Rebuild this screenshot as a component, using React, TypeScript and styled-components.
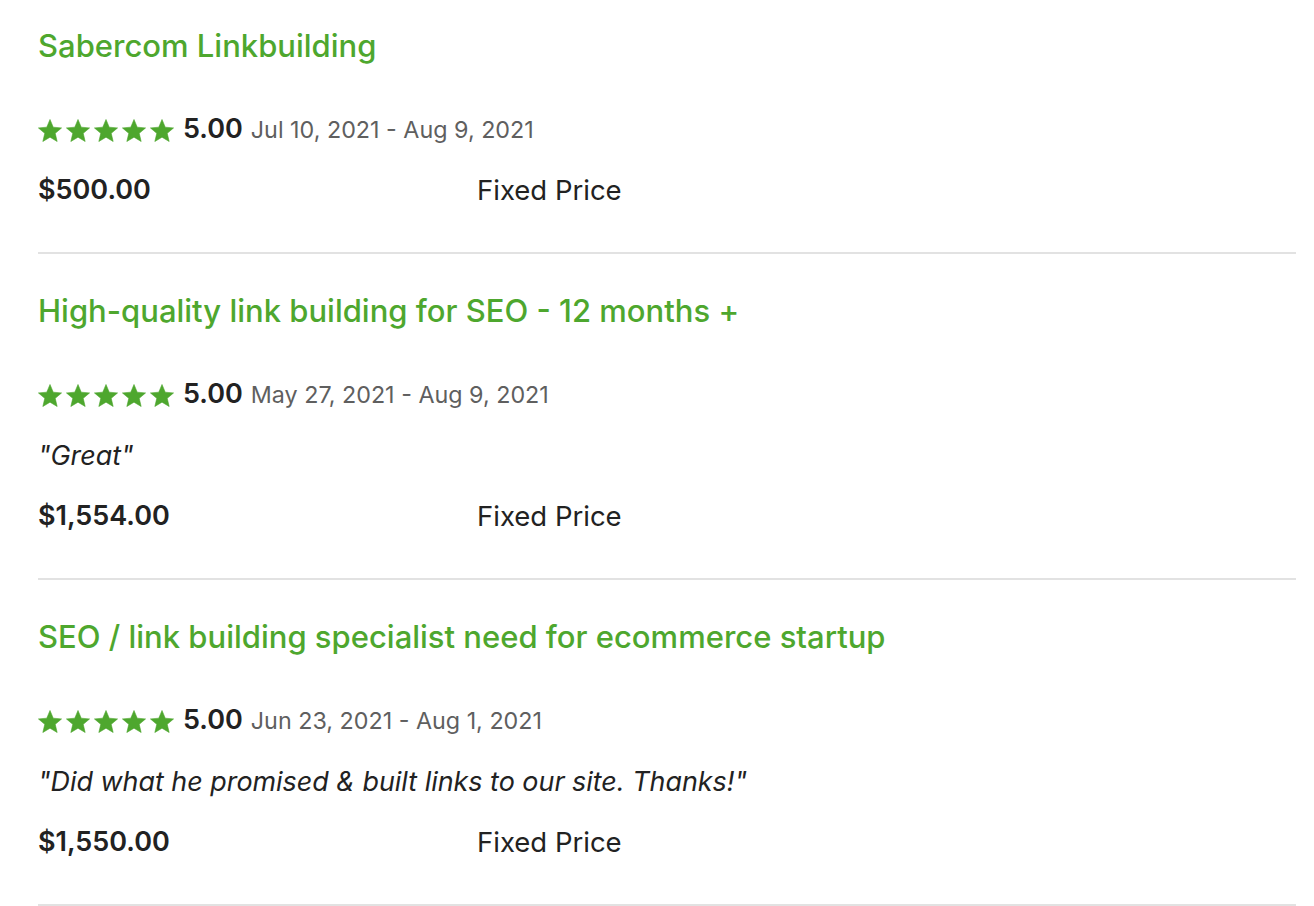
import React from "react";
import styled, { createGlobalStyle } from "styled-components";

const GlobalStyle = createGlobalStyle`
  html, body {
    margin: 0;
    padding: 0;
    background: #ffffff;
  }
  body {
    font-family: Inter, "Liberation Sans", Arial, sans-serif;
    color: #222222;
  }
`;

const List = styled.div`
  display: flex;
  flex-direction: column;
  padding: 0 18px 0 38px;
`;

const Item = styled.section`
  display: flex;
  flex-direction: column;
  padding: 37px 0 46px;
  border-bottom: 2px solid #e2e2e2;

  &:first-child {
    padding-top: 26px;
  }
`;

const Title = styled.a`
  display: block;
  font-size: 31px;
  line-height: 40px;
  font-weight: 500;
  letter-spacing: 0;
  color: #4ea72e;
  text-decoration: none;
  margin-bottom: 47px;
`;

const RatingRow = styled.div`
  display: flex;
  align-items: baseline;
  height: 32px;
  line-height: 32px;
`;

const Stars = styled.span`
  display: inline-flex;
  gap: 4px;
  align-self: center;
  margin-right: 9px;
  margin-top: 2px;
`;

const Score = styled.span`
  font-size: 27px;
  font-weight: 600;
  color: #222222;
  margin-right: 8px;
`;

const Dates = styled.span`
  font-size: 23.3px;
  color: #5f5f5f;
`;

const Quote = styled.p`
  margin: 29px 0 0;
  font-size: 26.9px;
  line-height: 32px;
  font-style: italic;
  color: #222222;
`;

const PriceRow = styled.div`
  display: grid;
  grid-template-columns: 439px 1fr;
  margin-top: 29px;
  font-size: 27px;
  line-height: 32px;
`;

const Amount = styled.span`
  font-weight: 600;
  color: #222222;
`;

const Kind = styled.span`
  font-size: 27.5px;
  font-weight: 400;
  color: #222222;
`;

const Star = () => (
  <svg width="24" height="23" viewBox="-0.3 -0.3 24.8 23.4" aria-hidden="true">
    <polygon
      fill="#4ea72e"
      stroke="#4ea72e"
      strokeWidth="0.6"
      strokeLinejoin="round"
      points="12.1,0 15.45,7.99 24.08,8.71 17.52,14.36 19.51,22.79 12.1,18.3 4.69,22.79 6.68,14.36 0.12,8.71 8.75,7.99"
    />
  </svg>
);

type Job = {
  title: string;
  score: string;
  dates: string;
  quote?: string;
  amount: string;
  kind: string;
};

const jobs: Job[] = [
  {
    title: "Sabercom Linkbuilding",
    score: "5.00",
    dates: "Jul 10, 2021 - Aug 9, 2021",
    amount: "$500.00",
    kind: "Fixed Price",
  },
  {
    title: "High-quality link building for SEO - 12 months +",
    score: "5.00",
    dates: "May 27, 2021 - Aug 9, 2021",
    quote: "\"Great\"",
    amount: "$1,554.00",
    kind: "Fixed Price",
  },
  {
    title: "SEO / link building specialist need for ecommerce startup",
    score: "5.00",
    dates: "Jun 23, 2021 - Aug 1, 2021",
    quote: "\"Did what he promised & built links to our site. Thanks!\"",
    amount: "$1,550.00",
    kind: "Fixed Price",
  },
];

export default function App() {
  return (
    <>
      <GlobalStyle />
      <List>
        {jobs.map((job) => (
          <Item key={job.title}>
            <Title href="#">{job.title}</Title>
            <RatingRow>
              <Stars>
                {[0, 1, 2, 3, 4].map((i) => (
                  <Star key={i} />
                ))}
              </Stars>
              <Score>{job.score}</Score>
              <Dates>{job.dates}</Dates>
            </RatingRow>
            {job.quote && <Quote>{job.quote}</Quote>}
            <PriceRow>
              <Amount>{job.amount}</Amount>
              <Kind>{job.kind}</Kind>
            </PriceRow>
          </Item>
        ))}
      </List>
    </>
  );
}
